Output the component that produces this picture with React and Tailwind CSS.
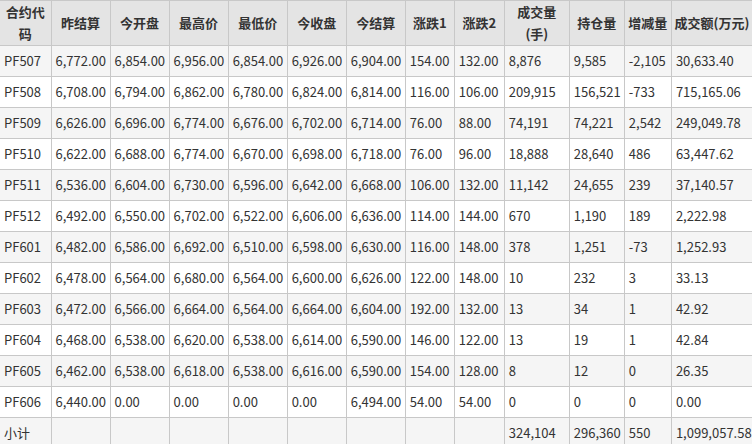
const W=[51,59,59,59,59,59,59,49,50,65,55,47,81];
const H=["合约代码","昨结算","今开盘","最高价","最低价","今收盘","今结算","涨跌1","涨跌2","成交量(手)","持仓量","增减量","成交额(万元)"];
const R=`PF507 6,772.00 6,854.00 6,956.00 6,854.00 6,926.00 6,904.00 154.00 132.00 8,876 9,585 -2,105 30,633.40
PF508 6,708.00 6,794.00 6,862.00 6,780.00 6,824.00 6,814.00 116.00 106.00 209,915 156,521 -733 715,165.06
PF509 6,626.00 6,696.00 6,774.00 6,676.00 6,702.00 6,714.00 76.00 88.00 74,191 74,221 2,542 249,049.78
PF510 6,622.00 6,688.00 6,774.00 6,670.00 6,698.00 6,718.00 76.00 96.00 18,888 28,640 486 63,447.62
PF511 6,536.00 6,604.00 6,730.00 6,596.00 6,642.00 6,668.00 106.00 132.00 11,142 24,655 239 37,140.57
PF512 6,492.00 6,550.00 6,702.00 6,522.00 6,606.00 6,636.00 114.00 144.00 670 1,190 189 2,222.98
PF601 6,482.00 6,586.00 6,692.00 6,510.00 6,598.00 6,630.00 116.00 148.00 378 1,251 -73 1,252.93
PF602 6,478.00 6,564.00 6,680.00 6,564.00 6,600.00 6,626.00 122.00 148.00 10 232 3 33.13
PF603 6,472.00 6,566.00 6,664.00 6,564.00 6,664.00 6,604.00 192.00 132.00 13 34 1 42.92
PF604 6,468.00 6,538.00 6,620.00 6,538.00 6,614.00 6,590.00 146.00 122.00 13 19 1 42.84
PF605 6,462.00 6,538.00 6,618.00 6,538.00 6,616.00 6,590.00 154.00 128.00 8 12 0 26.35
PF606 6,440.00 0.00 0.00 0.00 0.00 6,494.00 54.00 54.00 0 0 0 0.00
小计 - - - - - - - - 324,104 296,360 550 1,099,057.58`.split("\n").map(l=>l.split(" ").map(c=>c==="-"?"":c));
export default function App(){
  return <div className="w-[752px] h-[444px] overflow-hidden bg-white text-[13px] text-[#333]" style={{fontFamily:'"Noto Sans CJK SC","Noto Sans",sans-serif'}}>
    <table className="table-fixed border-collapse w-[753px]">
      <colgroup>{W.map((w,i)=><col key={i} style={{width:w}}/>)}</colgroup>
      <thead><tr className="bg-[#e4e4e4] h-[45px]">{H.map((h,i)=><th key={i} className="border border-[#c8c8c8] font-bold text-center leading-[22px] px-[2px] whitespace-normal first:border-l-0">{h}</th>)}</tr></thead>
      <tbody>{R.map((r,i)=><tr key={i} className={`h-[31px] ${i%2===0?"bg-[#f5f5f5]":"bg-white"}`}>{r.map((c,j)=><td key={j} className="border border-[#c8c8c8] pl-[4px] whitespace-nowrap overflow-hidden first:border-l-0">{c}</td>)}</tr>)}</tbody>
    </table>
  </div>;
}
